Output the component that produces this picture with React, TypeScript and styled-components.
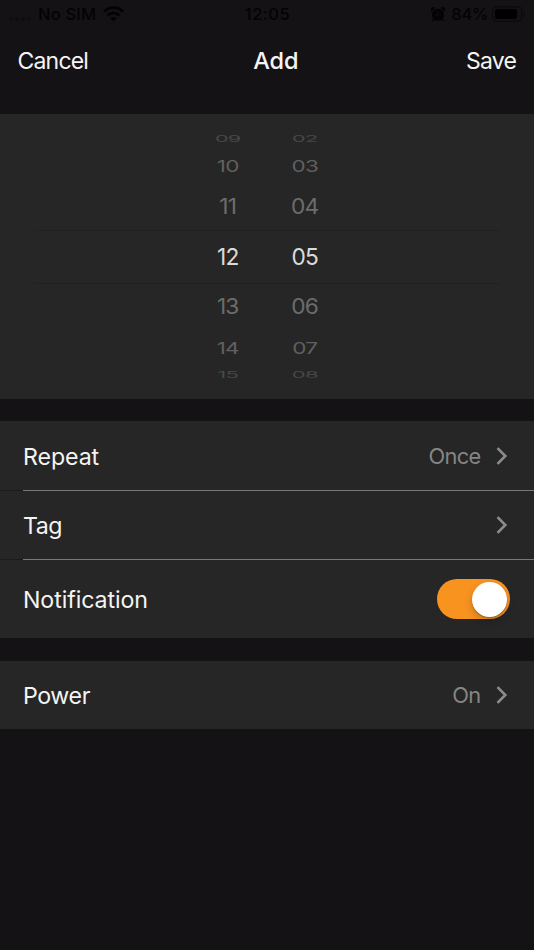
import React, { useState } from "react";
import styled, { createGlobalStyle } from "styled-components";

const GlobalStyle = createGlobalStyle`
  * { box-sizing: border-box; }
  html, body { margin: 0; background: #141215; }
  body { font-family: Inter, "Liberation Sans", sans-serif; color: #f4f4f4; }
  button { font: inherit; color: inherit; background: none; border: 0; padding: 0; }
`;

const Screen = styled.main`
  display: flex;
  flex-direction: column;
  width: 534px;
  height: 950px;
  overflow: hidden;
  background: #141215;
`;

const StatusBar = styled.div`
  display: grid;
  grid-template-columns: 1fr auto 1fr;
  align-items: center;
  height: 28px;
  padding: 0 8px 0 9px;
  color: #030304;
  font-size: 16.5px;
  font-weight: 500;
  line-height: 28px;
`;

const StatusGroup = styled.div<{ $end?: boolean }>`
  display: flex;
  align-items: center;
  justify-content: ${(p) => (p.$end ? "flex-end" : "flex-start")};
`;

const StatusText = styled.span<{ $spacing: number }>`
  letter-spacing: ${(p) => p.$spacing}px;
  white-space: nowrap;
`;

const SignalDots = styled.span`
  display: flex;
  gap: 2px;
  margin: 10px 7px 0 0;
`;

const SignalDot = styled.i`
  width: 4px;
  height: 4px;
  border-radius: 50%;
  background: #0e0d0f;
`;

const WifiIcon = styled.svg`
  margin-left: 7px;
`;

const AlarmIcon = styled.svg`
  margin-right: 6px;
`;

const BatteryIcon = styled.svg`
  margin-left: 4px;
`;

const NavBar = styled.header`
  display: grid;
  grid-template-columns: 1fr auto 1fr;
  align-items: center;
  height: 86px;
  padding: 0 18px 20px 17.5px;
`;

const NavButton = styled.button<{ $end?: boolean }>`
  justify-self: ${(p) => (p.$end ? "end" : "start")};
  font-size: 23px;
  letter-spacing: ${(p) => (p.$end ? -0.8 : -0.8)}px;
`;

const Title = styled.h1`
  margin: -2px 0 0 18px;
  font-size: 23.5px;
  font-weight: 500;
  letter-spacing: -0.2px;
`;

const Picker = styled.section`
  flex: none;
  height: 285px;
  padding: 16px 34px;
  margin-bottom: 22px;
  background: #262626;
`;

const PickerRow = styled.div<{ $height: number; $selected: boolean }>`
  display: grid;
  grid-template: 100% / 77.5px 77.5px;
  justify-content: center;
  align-items: center;
  height: ${(p) => p.$height}px;
  padding-right: 1.5px;
  box-shadow: ${(p) => (p.$selected ? "inset 0 1px #212121, inset 0 -1px #212121" : "none")};
`;

const Digit = styled.span<{ $color: string; $squash: number; $stretch: number }>`
  color: ${(p) => p.$color};
  font-size: 23.2px;
  line-height: 28px;
  letter-spacing: -0.8px;
  text-align: center;
  transform: scale(${(p) => p.$stretch}, ${(p) => p.$squash});
`;

const Group = styled.section`
  flex: none;
  margin-bottom: 23px;
  background: #262626;
`;

const Row = styled.div<{ $height: number }>`
  display: flex;
  align-items: center;
  height: ${(p) => p.$height}px;
  padding: 0 26px 0 23px;
`;

const Divider = styled.div`
  height: 1px;
  background: linear-gradient(to right, #1c1c1c 23px, #797979 23px);
`;

const Label = styled.span<{ $spacing: number }>`
  flex: 1;
  padding-top: 2px;
  font-size: 23.2px;
  line-height: 30px;
  letter-spacing: ${(p) => p.$spacing}px;
`;

const Value = styled.span`
  margin-right: 15.5px;
  color: #858585;
  font-size: 21.8px;
  letter-spacing: -0.7px;
`;

const Toggle = styled.button<{ $on: boolean }>`
  display: flex;
  justify-content: ${(p) => (p.$on ? "flex-end" : "flex-start")};
  align-items: center;
  width: 73px;
  height: 40px;
  padding: 0 3px;
  margin-right: -2px;
  border-radius: 20px;
  background: ${(p) => (p.$on ? "#f9931f" : "#555")};
`;

const Knob = styled.span`
  width: 35px;
  height: 35px;
  border-radius: 50%;
  background: #fff;
  box-shadow: 0 4px 8px rgba(0, 0, 0, 0.2), 0 1px 1px rgba(0, 0, 0, 0.25);
`;

const slots = [
  { hour: "09", minute: "02", height: 18, squash: 0.38, stretch: 0.93, color: "#484848" },
  { hour: "10", minute: "03", height: 36, squash: 0.7, stretch: 0.97, color: "#606060" },
  { hour: "11", minute: "04", height: 46, squash: 0.9, stretch: 0.98, color: "#6c6c6c" },
  { hour: "12", minute: "05", height: 54, squash: 1, stretch: 0.98, color: "#dadada" },
  { hour: "13", minute: "06", height: 46, squash: 0.9, stretch: 0.98, color: "#6c6c6c" },
  { hour: "14", minute: "07", height: 36, squash: 0.7, stretch: 0.97, color: "#606060" },
  { hour: "15", minute: "08", height: 17, squash: 0.38, stretch: 0.95, color: "#484848" },
];

const Chevron = () => (
  <svg width="12" height="18" viewBox="0 0 12 18" fill="none">
    <path d="M1.5 1.2 L9.3 9 L1.5 16.8" stroke="#8c8c8c" strokeWidth="2.6" />
  </svg>
);

export default function App() {
  const [notify, setNotify] = useState(true);
  return (
    <Screen>
      <GlobalStyle />
      <StatusBar>
        <StatusGroup>
          <SignalDots>
            <SignalDot /><SignalDot /><SignalDot /><SignalDot />
          </SignalDots>
          <StatusText $spacing={0.2}>No SIM</StatusText>
          <WifiIcon width="21" height="16" viewBox="0 0 21 16" fill="none" stroke="#030304" strokeWidth="2.8">
            <path d="M1 5.6 C6.4 .4 14.6 .4 20 5.6" />
            <path d="M4.5 9.4 C8 6.2 13 6.2 16.5 9.4" />
            <path d="M10.5 15.4 L7.2 12.2 C9 10.6 12 10.6 13.8 12.2 Z" fill="#030304" stroke="none" />
          </WifiIcon>
        </StatusGroup>
        <StatusText $spacing={0.5}>12:05</StatusText>
        <StatusGroup $end>
          <AlarmIcon width="14" height="15" viewBox="0 0 14 15" fill="#030304">
            <circle cx="7" cy="7.8" r="6" />
            <path d="M.4 4.4 A2.4 2.4 0 0 1 4.3 1 Z M13.6 4.4 A2.4 2.4 0 0 0 9.7 1 Z" />
            <path d="M3 12 L1.5 14 M11 12 L12.5 14" stroke="#030304" strokeWidth="1.5" />
            <path d="M7 4.4 V8 H4.4" fill="none" stroke="#151316" strokeWidth="1" />
          </AlarmIcon>
          <StatusText $spacing={-0.3}>84%</StatusText>
          <BatteryIcon width="34" height="16" viewBox="0 0 34 16">
            <rect x=".8" y=".8" width="29" height="14.4" rx="4" fill="none" stroke="#0c0b0d" strokeWidth="1.4" />
            <rect x="3" y="3" width="22" height="10" rx="2" fill="#000" />
            <path d="M31.5 5.3 Q34.5 8 31.5 10.7 Z" fill="#0c0b0d" />
          </BatteryIcon>
        </StatusGroup>
      </StatusBar>
      <NavBar>
        <NavButton>Cancel</NavButton>
        <Title>Add</Title>
        <NavButton $end>Save</NavButton>
      </NavBar>
      <Picker>
        {slots.map((s) => (
          <PickerRow key={s.hour} $height={s.height} $selected={s.hour === "12"}>
            <Digit $color={s.color} $squash={s.squash} $stretch={s.stretch}>{s.hour}</Digit>
            <Digit $color={s.color} $squash={s.squash} $stretch={s.stretch}>{s.minute}</Digit>
          </PickerRow>
        ))}
      </Picker>
      <Group>
        <Row $height={69}>
          <Label $spacing={-0.1}>Repeat</Label>
          <Value>Once</Value>
          <Chevron />
        </Row>
        <Divider />
        <Row $height={68}>
          <Label $spacing={-0.5}>Tag</Label>
          <Chevron />
        </Row>
        <Divider />
        <Row $height={78}>
          <Label $spacing={-0.1}>Notification</Label>
          <Toggle $on={notify} role="switch" aria-checked={notify} aria-label="Notification" onClick={() => setNotify(!notify)}>
            <Knob />
          </Toggle>
        </Row>
      </Group>
      <Group>
        <Row $height={68}>
          <Label $spacing={-0.4}>Power</Label>
          <Value>On</Value>
          <Chevron />
        </Row>
      </Group>
    </Screen>
  );
}
